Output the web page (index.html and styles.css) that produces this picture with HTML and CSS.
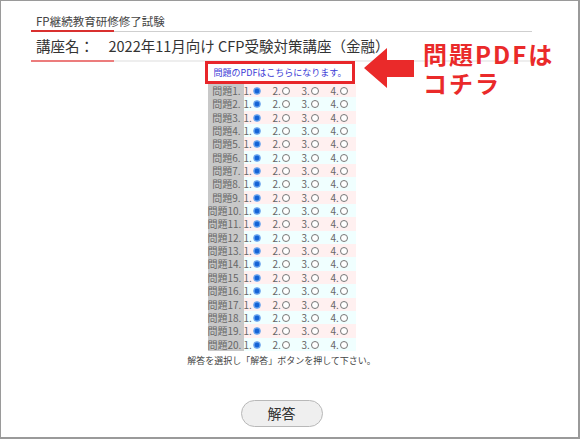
FILE: index.html
```html
<!DOCTYPE html>
<html lang="ja">
<head>
<meta charset="utf-8">
<title>FP継続教育研修修了試験</title>
<link rel="stylesheet" href="styles.css">
</head>
<body>
<div class="frame">
  <div class="page">
    <div class="title">FP継続教育研修修了試験</div>
    <div class="course">講座名：　2022年11月向け CFP受験対策講座（金融）</div>
    <div class="pdf-row"><a class="pdf-link" href="#">問題のPDFはこちらになります。</a></div>
    <div class="quiz">
      <div class="row odd"><span class="q">問題1.</span><span class="opt">1.<i class="radio on"></i></span><span class="opt">2.<i class="radio"></i></span><span class="opt">3.<i class="radio"></i></span><span class="opt">4.<i class="radio"></i></span></div>
      <div class="row even"><span class="q">問題2.</span><span class="opt">1.<i class="radio on"></i></span><span class="opt">2.<i class="radio"></i></span><span class="opt">3.<i class="radio"></i></span><span class="opt">4.<i class="radio"></i></span></div>
      <div class="row odd"><span class="q">問題3.</span><span class="opt">1.<i class="radio on"></i></span><span class="opt">2.<i class="radio"></i></span><span class="opt">3.<i class="radio"></i></span><span class="opt">4.<i class="radio"></i></span></div>
      <div class="row even"><span class="q">問題4.</span><span class="opt">1.<i class="radio on"></i></span><span class="opt">2.<i class="radio"></i></span><span class="opt">3.<i class="radio"></i></span><span class="opt">4.<i class="radio"></i></span></div>
      <div class="row odd"><span class="q">問題5.</span><span class="opt">1.<i class="radio on"></i></span><span class="opt">2.<i class="radio"></i></span><span class="opt">3.<i class="radio"></i></span><span class="opt">4.<i class="radio"></i></span></div>
      <div class="row even"><span class="q">問題6.</span><span class="opt">1.<i class="radio on"></i></span><span class="opt">2.<i class="radio"></i></span><span class="opt">3.<i class="radio"></i></span><span class="opt">4.<i class="radio"></i></span></div>
      <div class="row odd"><span class="q">問題7.</span><span class="opt">1.<i class="radio on"></i></span><span class="opt">2.<i class="radio"></i></span><span class="opt">3.<i class="radio"></i></span><span class="opt">4.<i class="radio"></i></span></div>
      <div class="row even"><span class="q">問題8.</span><span class="opt">1.<i class="radio on"></i></span><span class="opt">2.<i class="radio"></i></span><span class="opt">3.<i class="radio"></i></span><span class="opt">4.<i class="radio"></i></span></div>
      <div class="row odd"><span class="q">問題9.</span><span class="opt">1.<i class="radio on"></i></span><span class="opt">2.<i class="radio"></i></span><span class="opt">3.<i class="radio"></i></span><span class="opt">4.<i class="radio"></i></span></div>
      <div class="row even"><span class="q">問題10.</span><span class="opt">1.<i class="radio on"></i></span><span class="opt">2.<i class="radio"></i></span><span class="opt">3.<i class="radio"></i></span><span class="opt">4.<i class="radio"></i></span></div>
      <div class="row odd"><span class="q">問題11.</span><span class="opt">1.<i class="radio on"></i></span><span class="opt">2.<i class="radio"></i></span><span class="opt">3.<i class="radio"></i></span><span class="opt">4.<i class="radio"></i></span></div>
      <div class="row even"><span class="q">問題12.</span><span class="opt">1.<i class="radio on"></i></span><span class="opt">2.<i class="radio"></i></span><span class="opt">3.<i class="radio"></i></span><span class="opt">4.<i class="radio"></i></span></div>
      <div class="row odd"><span class="q">問題13.</span><span class="opt">1.<i class="radio on"></i></span><span class="opt">2.<i class="radio"></i></span><span class="opt">3.<i class="radio"></i></span><span class="opt">4.<i class="radio"></i></span></div>
      <div class="row even"><span class="q">問題14.</span><span class="opt">1.<i class="radio on"></i></span><span class="opt">2.<i class="radio"></i></span><span class="opt">3.<i class="radio"></i></span><span class="opt">4.<i class="radio"></i></span></div>
      <div class="row odd"><span class="q">問題15.</span><span class="opt">1.<i class="radio on"></i></span><span class="opt">2.<i class="radio"></i></span><span class="opt">3.<i class="radio"></i></span><span class="opt">4.<i class="radio"></i></span></div>
      <div class="row even"><span class="q">問題16.</span><span class="opt">1.<i class="radio on"></i></span><span class="opt">2.<i class="radio"></i></span><span class="opt">3.<i class="radio"></i></span><span class="opt">4.<i class="radio"></i></span></div>
      <div class="row odd"><span class="q">問題17.</span><span class="opt">1.<i class="radio on"></i></span><span class="opt">2.<i class="radio"></i></span><span class="opt">3.<i class="radio"></i></span><span class="opt">4.<i class="radio"></i></span></div>
      <div class="row even"><span class="q">問題18.</span><span class="opt">1.<i class="radio on"></i></span><span class="opt">2.<i class="radio"></i></span><span class="opt">3.<i class="radio"></i></span><span class="opt">4.<i class="radio"></i></span></div>
      <div class="row odd"><span class="q">問題19.</span><span class="opt">1.<i class="radio on"></i></span><span class="opt">2.<i class="radio"></i></span><span class="opt">3.<i class="radio"></i></span><span class="opt">4.<i class="radio"></i></span></div>
      <div class="row even"><span class="q">問題20.</span><span class="opt">1.<i class="radio on"></i></span><span class="opt">2.<i class="radio"></i></span><span class="opt">3.<i class="radio"></i></span><span class="opt">4.<i class="radio"></i></span></div>
    </div>
    <p class="note">解答を選択し「解答」ボタンを押して下さい。</p>
    <div class="btn-row"><button class="answer" type="button">解答</button></div>
  </div>
  <svg class="arrow" width="54" height="44" viewBox="0 0 54 44"><polygon points="2,22 25,2 25,14 52,14 52,31 25,31 25,42" fill="#ea2a2a"/></svg>
  <div class="callout">問題PDFは<br>コチラ</div>
</div>
</body>
</html>
```

FILE: styles.css
```css
html, body {
  margin: 0;
  padding: 0;
  background: #fff;
}

body {
  font-family: "Noto Sans CJK JP", "Noto Sans", sans-serif;
  color: #333;
}

.frame {
  position: relative;
  width: 580px;
  height: 439px;
  box-sizing: border-box;
  border-style: solid;
  border-color: #9a9a9a;
  border-width: 1px 2px 2px 1px;
  overflow: hidden;
}

.page {
  margin-left: 30px;
  width: 501px;
}

.title {
  padding: 11px 0 2px 5px;
  font-size: 11.5px;
  line-height: 18px;
  color: #444;
  background:
    linear-gradient(#d9302f, #d9302f) left bottom / 83px 2px no-repeat,
    linear-gradient(#cfcfcf, #cfcfcf) left bottom / 100% 1px no-repeat;
}

.course {
  padding: 4px 0 6px 5px;
  font-size: 14.5px;
  line-height: 20px;
  color: #333;
  background:
    linear-gradient(#ec7c7c, #ec7c7c) left bottom / 83px 2px no-repeat,
    linear-gradient(#eeeeee, #eeeeee) left bottom / 100% 2px no-repeat;
}

.pdf-row {
  display: flex;
  justify-content: center;
  margin-top: -1px;
  padding-right: 3px;
}

.pdf-link {
  display: block;
  border: 3px solid #e8262a;
  padding: 0 6px;
  font-size: 9px;
  line-height: 17px;
  color: #3b3bd6;
  text-decoration: none;
}

.quiz {
  width: 148px;
  margin: 0 auto;
  font-size: 10px;
  color: #666;
}

.row {
  display: grid;
  grid-template-columns: 36px 29px 29px 29px 25px;
  height: 13.35px;
  line-height: 13.35px;
}

.row.odd {
  background: #fff0f0;
}

.row.even {
  background: #f0ffff;
}

.q {
  background: #c8c8c8;
  text-align: right;
  padding-right: 3px;
  white-space: nowrap;
}

.opt {
  white-space: nowrap;
}

.radio {
  display: inline-block;
  width: 8px;
  height: 8px;
  box-sizing: border-box;
  margin-left: 1px;
  border-radius: 50%;
  border: 1px solid #777;
  background: #fff;
  vertical-align: baseline;
}

.radio.on {
  border-color: #79adef;
  background: radial-gradient(circle, #1463d6 0 2px, #4a90ea 2.6px);
}

.note {
  margin: 3px 0 0;
  text-align: center;
  font-size: 9px;
  line-height: 14px;
  color: #444;
}

.btn-row {
  display: flex;
  justify-content: center;
  margin-top: 32px;
}

.answer {
  width: 82px;
  height: 27px;
  padding: 0;
  border: 1px solid #b8b8b8;
  border-radius: 14px;
  background: #efefef;
  font-family: "Noto Sans CJK JP", sans-serif;
  font-size: 14px;
  color: #333;
}

.arrow {
  position: absolute;
  left: 361px;
  top: 45px;
}

.callout {
  position: absolute;
  left: 422px;
  top: 38px;
  font-size: 24px;
  font-weight: bold;
  line-height: 29px;
  letter-spacing: 2px;
  color: #ea2a2a;
  white-space: nowrap;
}
```
